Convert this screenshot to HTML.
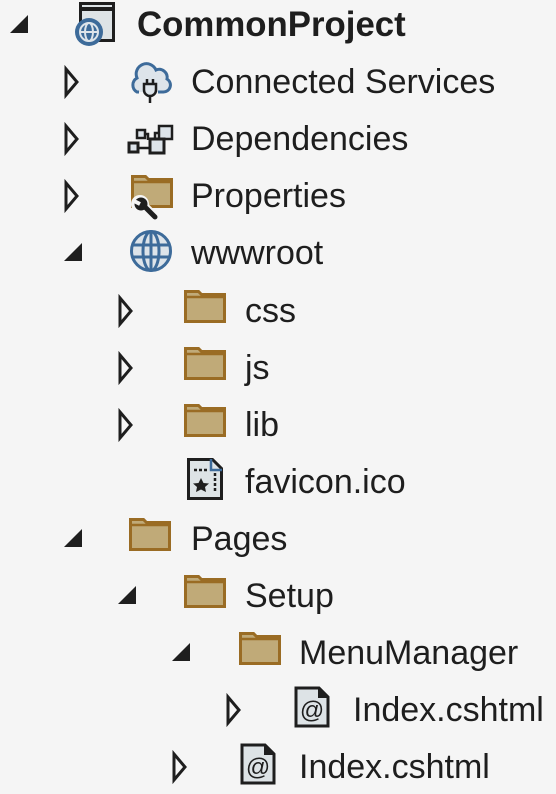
<!DOCTYPE html>
<html><head><meta charset="utf-8"><style>
body{margin:0;width:556px;height:794px;background:#f5f5f5;position:relative;overflow:hidden;font-family:"Segoe UI","Liberation Sans",sans-serif;color:#1e1e1e}
.t{position:absolute;font-size:34px;line-height:48px;height:48px;white-space:nowrap}
.b{font-weight:bold;font-size:34.8px}
svg{position:absolute;overflow:visible}
</style></head><body>
<svg width="0" height="0"><defs>
<g id="fold"><path d="M2.5 4.5h13l3 3h23v27h-39z" fill="#c0aa78" stroke="#9a6c24" stroke-width="3"/><path d="M2.5 10h39" stroke="#9a6c24" stroke-width="2.5"/></g>
<g id="exp"><polygon points="18,1 18,19 0,19" fill="#1e1e1e"/></g>
<g id="col"><polygon points="2,2 13,15 2,28" fill="none" stroke="#1e1e1e" stroke-width="3" stroke-linejoin="miter"/></g>
<g id="globe"><circle cx="23" cy="22" r="19.5" fill="#dde4ea" stroke="#3d6b9a" stroke-width="3"/><ellipse cx="23" cy="22" rx="8" ry="19.5" fill="none" stroke="#3d6b9a" stroke-width="3"/><path d="M4 16h38M4 28h38M23 3v38" stroke="#3d6b9a" stroke-width="3"/></g>
<g id="cs"><path d="M2 2h23l9 9v29h-32z" fill="#dde3e6" stroke="#1e1e1e" stroke-width="3"/><path d="M24 2v10h10z" fill="#1e1e1e"/><text x="18" y="32" font-size="24" text-anchor="middle" font-family="Liberation Sans,sans-serif" fill="#1e1e1e">@</text></g>
</defs></svg>

<svg style="left:10px;top:14px" width="20" height="20"><use href="#exp"/></svg>
<svg style="left:73px;top:1px" width="48" height="48"><rect x="7.5" y="2.5" width="33" height="37" fill="#dde3e6" stroke="#1e1e1e" stroke-width="3"/><path d="M7 8h34" stroke="#1e1e1e" stroke-width="4"/><circle cx="16" cy="31" r="14" fill="#3d6b9a"/><circle cx="16" cy="31" r="9" fill="none" stroke="#dde4ea" stroke-width="2"/><ellipse cx="16" cy="31" rx="4" ry="9" fill="none" stroke="#dde4ea" stroke-width="2"/><path d="M7 31h18" stroke="#dde4ea" stroke-width="2"/></svg>
<div class="t b" style="left:137px;top:1px">CommonProject</div>

<svg style="left:64px;top:67px" width="16" height="32"><use href="#col"/></svg>
<svg style="left:128px;top:58px" width="48" height="48"><path d="M11 34h-2a8 8 0 0 1 0-14a10 10 0 0 1 19-8a8 8 0 0 1 11 9a7 7 0 0 1-4 13h-5" fill="#dde4ea" stroke="#3d6b9a" stroke-width="3"/><path d="M16 26h12v6a6 6 0 0 1-12 0z" fill="#dde4ea" stroke="#1e1e1e" stroke-width="2.5"/><path d="M19 21v5M25 21v5M22 38v7" stroke="#1e1e1e" stroke-width="2.5"/></svg>
<div class="t" style="left:191px;top:58px">Connected Services</div>

<svg style="left:64px;top:124px" width="16" height="32"><use href="#col"/></svg>
<svg style="left:128px;top:115px" width="48" height="48"><rect x="9" y="15" width="8" height="8" fill="#dde4ea" stroke="#1e1e1e" stroke-width="2.5"/><rect x="31" y="11" width="13" height="13" fill="#dde4ea" stroke="#1e1e1e" stroke-width="2.5"/><rect x="1" y="28" width="9" height="9" fill="#dde4ea" stroke="#1e1e1e" stroke-width="3"/><rect x="22" y="24" width="14" height="14" fill="#dde4ea" stroke="#1e1e1e" stroke-width="3"/><path d="M10 33h12M17 19h3v6M31 18h-4v6" stroke="#1e1e1e" stroke-width="2.5" fill="none"/></svg>
<div class="t" style="left:191px;top:115px">Dependencies</div>

<svg style="left:64px;top:181px" width="16" height="32"><use href="#col"/></svg>
<svg style="left:128px;top:172px" width="48" height="48"><g transform="translate(2,0)"><use href="#fold"/></g><circle cx="12" cy="32" r="9" fill="#f5f5f5"/><path d="M18 36l10 10" stroke="#f5f5f5" stroke-width="9" stroke-linecap="round"/><path d="M18 36l9 9" stroke="#1e1e1e" stroke-width="5" stroke-linecap="round"/><circle cx="13" cy="32" r="6.5" fill="#1e1e1e"/><path d="M6 29l6 3" stroke="#f5f5f5" stroke-width="4"/></svg>
<div class="t" style="left:191px;top:172px">Properties</div>

<svg style="left:64px;top:242px" width="20" height="20"><use href="#exp"/></svg>
<svg style="left:128px;top:229px" width="48" height="48"><use href="#globe"/></svg>
<div class="t" style="left:191px;top:229px">wwwroot</div>

<svg style="left:118px;top:296px" width="16" height="32"><use href="#col"/></svg>
<svg style="left:183px;top:287px" width="48" height="48"><use href="#fold"/></svg>
<div class="t" style="left:245px;top:287px">css</div>
<svg style="left:118px;top:353px" width="16" height="32"><use href="#col"/></svg>
<svg style="left:183px;top:344px" width="48" height="48"><use href="#fold"/></svg>
<div class="t" style="left:245px;top:344px">js</div>
<svg style="left:118px;top:410px" width="16" height="32"><use href="#col"/></svg>
<svg style="left:183px;top:401px" width="48" height="48"><use href="#fold"/></svg>
<div class="t" style="left:245px;top:401px">lib</div>

<svg style="left:183px;top:458px" width="48" height="48"><path d="M5.5 1.5h24l9 9v30h-33z" fill="#dde3e6" stroke="#1e1e1e" stroke-width="3"/><path d="M28 1v11h11" fill="none" stroke="#3d6b9a" stroke-width="2.5"/><path d="M11 12h14M32 15v20" stroke="#1e1e1e" stroke-width="2.5" stroke-dasharray="3 2"/><polygon points="18,20 20.5,25 26,25.5 22,29 23,34 18,31.5 13,34 14,29 10,25.5 15.5,25" fill="#1e1e1e"/></svg>
<div class="t" style="left:245px;top:458px">favicon.ico</div>

<svg style="left:64px;top:528px" width="20" height="20"><use href="#exp"/></svg>
<svg style="left:128px;top:515px" width="48" height="48"><use href="#fold"/></svg>
<div class="t" style="left:191px;top:515px">Pages</div>

<svg style="left:118px;top:585px" width="20" height="20"><use href="#exp"/></svg>
<svg style="left:183px;top:572px" width="48" height="48"><use href="#fold"/></svg>
<div class="t" style="left:245px;top:572px">Setup</div>

<svg style="left:172px;top:642px" width="20" height="20"><use href="#exp"/></svg>
<svg style="left:238px;top:629px" width="48" height="48"><use href="#fold"/></svg>
<div class="t" style="left:299px;top:629px">MenuManager</div>

<svg style="left:226px;top:695px" width="16" height="32"><use href="#col"/></svg>
<svg style="left:294px;top:686px" width="48" height="48"><use href="#cs"/></svg>
<div class="t" style="left:353px;top:686px">Index.cshtml</div>

<svg style="left:172px;top:752px" width="16" height="32"><use href="#col"/></svg>
<svg style="left:240px;top:743px" width="48" height="48"><use href="#cs"/></svg>
<div class="t" style="left:299px;top:743px">Index.cshtml</div>
</body></html>
